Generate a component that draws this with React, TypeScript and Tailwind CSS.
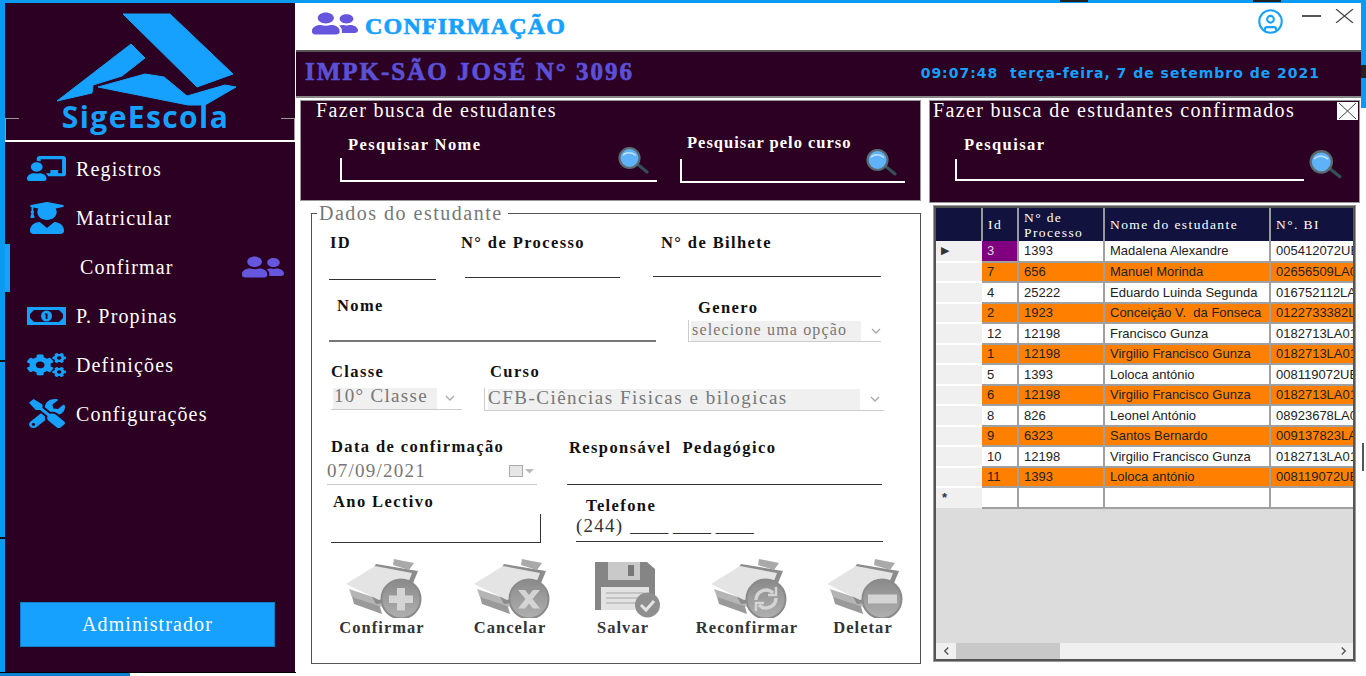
import type { ReactNode } from "react";
import { CircleUser } from "lucide-react";
import { FaChalkboardTeacher, FaCogs, FaTools, FaUserFriends, FaUserGraduate } from "react-icons/fa";

const SERIF = "font-['Liberation_Serif','Times_New_Roman',serif]";

const NAV = [
  { label: "Registros", icon: <FaChalkboardTeacher preserveAspectRatio="none" className="h-[25px] w-[39px]" /> },
  { label: "Matricular", icon: <FaUserGraduate preserveAspectRatio="none" className="h-[32px] w-[34px]" /> },
];

const NAV_BOTTOM = [
  { label: "P. Propinas", icon: <BillIcon /> },
  { label: "Definições", icon: <FaCogs preserveAspectRatio="none" className="h-[24px] w-[39px]" /> },
  { label: "Configurações", icon: <FaTools preserveAspectRatio="none" className="h-[29px] w-[36px]" /> },
];

const ROWS = [
  ["3", "1393", "Madalena Alexandre", "005412072UE"],
  ["7", "656", "Manuel Morinda", "02656509LA0"],
  ["4", "25222", "Eduardo Luinda Segunda", "016752112LA"],
  ["2", "1923", "Conceição V.  da Fonseca", "0122733382L"],
  ["12", "12198", "Francisco Gunza", "0182713LA01"],
  ["1", "12198", "Virgilio Francisco Gunza", "0182713LA01"],
  ["5", "1393", "Loloca antónio", "008119072UE"],
  ["6", "12198", "Virgilio Francisco Gunza", "0182713LA01"],
  ["8", "826", "Leonel António", "08923678LA0"],
  ["9", "6323", "Santos Bernardo", "009137823LA"],
  ["10", "12198", "Virgilio Francisco Gunza", "0182713LA01"],
  ["11", "1393", "Loloca antónio", "008119072UE"],
];

function BillIcon() {
  return (
    <svg viewBox="0 0 39 18" className="h-[18px] w-[39px]">
      <rect width="39" height="18" fill="#16a1ff" />
      <path d="M7 3h25l4 4v4l-4 4H7l-4-4V7z" fill="#2c0022" />
      <circle cx="19.500" cy="9" r="5.500" fill="#16a1ff" />
      <path d="M18.700 6.500h1.800v5.500h-1.800z M17.500 7l1.500-1v2z" fill="#2c0022" />
    </svg>
  );
}

function Logo() {
  return (
    <svg viewBox="0 0 290 105" className="h-[105px] w-[290px]">
      <g fill="#16a1ff" stroke="#16a1ff" strokeWidth="1" strokeLinejoin="round" transform="translate(-5 -10)">
        <path d="M123 14 L170 14 L233 74 L197 87 Z" />
        <path d="M57 101 L131 44 L145 58 L122 76 L93 85 L92 93 Z" />
        <path d="M98 87 L145 74 L164 77 L187 96 L225 85 L236 87 L205 105 L188 105 Z" />
      </g>
    </svg>
  );
}

function SearchIcon({ className }: { className: string }) {
  return (
    <svg viewBox="0 0 32 27" className={className}>
      <path d="M19 16l11 9" stroke="#34505a" strokeWidth="3" strokeLinecap="round" />
      <circle cx="12.500" cy="11" r="10" fill="#60b2f8" stroke="#5b6a70" strokeWidth="2.200" />
      <path d="M6 8.500c2-3.500 9-4 13 0" fill="none" stroke="#bfe0fb" strokeWidth="1.400" />
    </svg>
  );
}

function ClipboardIcon({ badge }: { badge: "plus" | "x" | "sync" | "minus" }) {
  return (
    <svg viewBox="0 0 76 62" className="ml-[4px] h-[62px] w-[76px]">
      <defs>
        <linearGradient id="badge-fill" x1="0" y1="0" x2="0" y2="1">
          <stop offset="0" stopColor="#8a8a8a" />
          <stop offset="1" stopColor="#b0b0b0" />
        </linearGradient>
      </defs>
      <path d="M5 37L33 47L36 58L8 48Z" fill="#9a9a9a" />
      <path d="M3 33L33 43L36 51L6 41Z" fill="#b5b5b5" />
      <path d="M30 8L72 15L60 44L30 48L18 26Z" fill="#8c8c8c" />
      <path d="M48 3L68 7L63 14L47 9Z" fill="#a9a9a9" />
      <path d="M0 28L29 10L66 17L58 38L33 44Z" fill="#e4e4e4" />
      <circle cx="55" cy="43" r="19.500" fill="url(#badge-fill)" stroke="#8a8a8a" strokeWidth="2" />
      {badge === "plus" && <path d="M51 32h8v7.500h8v7.500h-8v7.500h-8V47h-8v-7.500h8z" fill="#d4d4d4" />}
      {badge === "x" && <path d="M44 34h7l4 5 4-5h7l-7.500 9 7.500 9.500h-7l-4-5-4 5h-7l7.500-9.500z" fill="#d4d4d4" />}
      {badge === "minus" && <rect x="41" y="38.500" width="29" height="9" fill="#d4d4d4" />}
      {badge === "sync" && (
        <g fill="none" stroke="#d4d4d4" strokeWidth="3.500">
          <path d="M45 44a10 10 0 0 1 17-7" />
          <path d="M65 42a10 10 0 0 1-17 7" />
          <path d="M65 31v8h-8" strokeWidth="2.500" />
          <path d="M45 55v-8h8" strokeWidth="2.500" />
        </g>
      )}
    </svg>
  );
}

function FloppyIcon() {
  return (
    <svg viewBox="0 0 70 56" className="ml-[14px] h-[56px] w-[70px]">
      <path d="M0 0H52L60 7V48H0Z" fill="#858585" />
      <rect x="13" y="0" width="32" height="18" fill="#c9c9c9" />
      <rect x="33" y="3" width="6" height="11" fill="#777" />
      <rect x="6" y="25" width="48" height="23" fill="#e2e2e2" />
      <path d="M11 31h38M11 36h38M11 41h38" stroke="#c4c4c4" strokeWidth="2" />
      <circle cx="52.500" cy="43" r="12.500" fill="#8f8f8f" />
      <path d="M46 43l5 5 8-9" fill="none" stroke="#e4e4e4" strokeWidth="3" />
    </svg>
  );
}

function Chevron({ className }: { className: string }) {
  return (
    <svg viewBox="0 0 10 6" className={className}>
      <path d="M1 1l4 4 4-4" fill="none" stroke="#a8a8a8" strokeWidth="1.300" />
    </svg>
  );
}

function Label({ children, className = "" }: { children: string; className?: string }) {
  return <div className={`h-[18px] text-[16.500px] font-bold leading-[20px] tracking-[1.400px] whitespace-pre text-[#111] ${className}`}>{children}</div>;
}

function ActionButton({ label, icon, width }: { label: string; icon: ReactNode; width: string }) {
  return (
    <div className={`flex flex-col items-center ${width}`}>
      <div className="flex h-[62px] items-end">{icon}</div>
      <div className="mt-[-2px] text-[16.500px] font-bold tracking-[1.050px] text-[#333]">{label}</div>
    </div>
  );
}

function Sidebar() {
  const item = "flex h-[49px] items-center text-[20px] tracking-[1.150px] text-white";
  return (
    <aside className="flex h-[669px] w-[290px] flex-col bg-[#2c0022]">
      <div className="relative h-[139px] border-b-2 border-white">
        <div className="pt-[7px]">
          <Logo />
        </div>
        <div className="absolute top-[96px] left-0 w-full pr-[9px] text-center font-['Open_Sans',sans-serif] text-[30px] leading-[36px] font-bold tracking-[1.400px] text-[#16a1ff]">SigeEscola</div>
        <div className="absolute top-[115px] left-0 h-[22px] w-[14px] border-t border-l border-[#999]" />
        <div className="absolute top-[115px] right-0 h-[22px] w-[14px] border-t border-r border-[#999]" />
      </div>
      <nav className="mt-[2px] text-white">
        {NAV.map((n) => (
          <div key={n.label} className={item}>
            <div className="ml-[22px] flex w-[49px] justify-center pr-[10px] text-[#16a1ff]">{n.icon}</div>
            {n.label}
          </div>
        ))}
        <div className={`${item} relative`}>
          <div className="absolute top-[2px] left-0 h-[48px] w-[5px] bg-[#16a1ff]" />
          <span className="ml-[75px]">Confirmar</span>
          <FaUserFriends preserveAspectRatio="none" className="ml-[68px] h-[24px] w-[42px] text-[#6655dd]" />
        </div>
        {NAV_BOTTOM.map((n) => (
          <div key={n.label} className={item}>
            <div className="ml-[22px] flex w-[49px] justify-center pr-[10px] text-[#16a1ff]">{n.icon}</div>
            {n.label}
          </div>
        ))}
      </nav>
      <div className="mt-auto mr-[20px] mb-[25px] ml-[15px] flex h-[45px] items-center justify-center border border-[#0f7fc8] bg-[#16a1ff] pb-[2px] text-[20px] tracking-[1.100px] text-white">Administrador</div>
    </aside>
  );
}

function SearchPanels() {
  const title = "text-[20px] leading-[18px] tracking-[1.350px] whitespace-nowrap";
  const searchLabel = "text-[16.500px] leading-[18px] font-bold tracking-[1.400px] whitespace-nowrap";
  return (
    <div className="flex items-start text-white">
      <section className="h-[101px] w-[621px] border border-[#999] bg-[#2c0022]">
        <div className={`ml-[15px] ${title}`}>Fazer busca de estudantes</div>
        <div className="flex">
          <div className="ml-[39px] w-[317px]">
            <div className={`mt-[17px] ml-[8px] ${searchLabel}`}>Pesquisar Nome</div>
            <div className="relative mt-[4px] h-[24px] border-b-2 border-l-2 border-white">
              <SearchIcon className="absolute top-[-11px] right-[8px] h-[27px] w-[32px]" />
            </div>
          </div>
          <div className="ml-[23px] w-[225px]">
            <div className={`mt-[15px] ml-[7px] text-[16.500px] leading-[18px] font-bold tracking-[1px] whitespace-nowrap`}>Pesquisar pelo curso</div>
            <div className="relative mt-[7px] h-[24px] border-b-2 border-l-2 border-white">
              <SearchIcon className="absolute top-[-10px] right-[8px] h-[27px] w-[32px]" />
            </div>
          </div>
        </div>
      </section>
      <section className="relative ml-[8px] h-[103px] w-[431px] border border-[#999] bg-[#2c0022]">
        <div className={`ml-[3px] ${title}`}>Fazer busca de estudantes confirmados</div>
        <div className="absolute top-[1px] right-[1px] flex h-[18px] w-[21px] items-center justify-center bg-white">
          <svg viewBox="0 0 21 18" className="h-[18px] w-[21px]">
            <path d="M2 1l17 16M19 1L2 17" stroke="#444" strokeWidth="1" />
          </svg>
        </div>
        <div className={`mt-[17px] ml-[34px] ${searchLabel}`}>Pesquisar</div>
        <div className="relative mt-[5px] ml-[25px] h-[22px] w-[349px] border-b-2 border-l-2 border-white">
          <SearchIcon className="absolute top-[-9px] right-[-38px] h-[29px] w-[34px]" />
        </div>
      </section>
    </div>
  );
}

function StudentForm() {
  const line = "border-b border-[#333]";
  return (
    <fieldset className="mt-[1px] ml-[11px] h-[460px] w-[610px] border border-[#555]">
      <legend className="ml-[5px] pr-[5px] pl-[2px] text-[20px] leading-[19px] tracking-[1.500px] text-[#777]">Dados do estudante</legend>
      <div className="pl-[17px]">
        {/* linha 1 */}
        <div className="mt-[10px] flex h-[49px] items-start">
          <div className={`h-[47px] w-[107px] ${line}`}>
            <Label className="ml-[1px]">ID</Label>
          </div>
          <div className={`ml-[29px] h-[45px] w-[155px] ${line}`}>
            <Label className="-ml-[4px]">N° de Processo</Label>
          </div>
          <div className={`ml-[33px] h-[44px] w-[228px] ${line}`}>
            <Label className="ml-[8px]">N° de Bilhete</Label>
          </div>
        </div>
        {/* linha 2 */}
        <div className="flex h-[61px] items-start">
          <div className="h-[60px] w-[327px] border-b-2 border-[#777] pt-[14px]">
            <Label className="ml-[8px]">Nome</Label>
          </div>
          <div className="ml-[32px] w-[193px] pt-[16px]">
            <Label className="ml-[10px]">Genero</Label>
            <div className="mt-[4px] flex h-[22px] items-center border-b border-l border-[#ccc] pl-[2px]">
              <div className="h-[20px] w-[170px] bg-[#f0f0f0] pl-[1px] text-[16px] leading-[18px] tracking-[1.150px] whitespace-nowrap text-[#777]">selecione uma opção</div>
              <Chevron className="ml-[10px] h-[6px] w-[10px]" />
            </div>
          </div>
        </div>
        {/* linha 3 */}
        <div className="flex h-[68px] items-start pt-[19px]">
          <div className="ml-[2px] w-[131px]">
            <Label>Classe</Label>
            <div className="mt-[7px] flex h-[23px] items-center border-b border-[#ccc] pl-[2px]">
              <div className="h-[21px] w-[104px] bg-[#f0f0f0] pl-[1px] text-[19px] leading-[16px] tracking-[1.300px] whitespace-nowrap text-[#777]">10° Classe</div>
              <Chevron className="ml-[8px] h-[6px] w-[10px]" />
            </div>
          </div>
          <div className="ml-[22px] w-[400px]">
            <Label className="ml-[6px]">Curso</Label>
            <div className="mt-[8px] flex h-[23px] items-center border-b border-l border-[#ccc] pl-[3px]">
              <div className="h-[21px] w-[372px] bg-[#f0f0f0] text-[19px] leading-[17px] tracking-[1.500px] whitespace-nowrap text-[#777]">CFB-Ciências Fisicas e bilogicas</div>
              <Chevron className="ml-[10px] h-[6px] w-[10px]" />
            </div>
          </div>
        </div>
        {/* linha 4 */}
        <div className="flex h-[74px] items-start pt-[26px]">
          <div className="-ml-[2px] h-[48px] w-[210px] border-b border-[#ccc]">
            <Label className="ml-[4px] tracking-[1.200px]">Data de confirmação</Label>
            <div className="mt-[5px] flex items-center text-[19px] leading-[21px] tracking-[1.250px] text-[#777]">
              07/09/2021
              <svg viewBox="0 0 26 12" className="ml-[83px] h-[12px] w-[26px]">
                <rect x="0.500" y="0.500" width="13" height="11" fill="#e6e6e6" stroke="#aaa" />
                <path d="M16 4h9l-4.500 4.500z" fill="#bbb" />
              </svg>
            </div>
          </div>
          <div className={`ml-[30px] h-[48px] w-[315px] ${line}`}>
            <Label className="mt-[1px] ml-[2px]">Responsável  Pedagógico</Label>
          </div>
        </div>
        {/* linha 5 */}
        <div className="flex h-[58px] items-start">
          <div className="ml-[2px] w-[210px] pt-[7px]">
            <Label className="ml-[2px]">Ano Lectivo</Label>
            <div className="mt-[4px] h-[29px] border-r border-b border-[#333]" />
          </div>
          <div className={`ml-[35px] h-[57px] w-[307px] pt-[11px] ${line}`}>
            <Label className="ml-[10px]">Telefone</Label>
            <div className="mt-[1px] text-[19px] leading-[21px] whitespace-pre text-[#333]">
              <span className="tracking-[1.200px]">(244)</span>
              <span className="ml-[7px]">____ ____ ____</span>
            </div>
          </div>
        </div>
        {/* botões */}
        <div className="-ml-[11px] flex pt-[13px]">
          <ActionButton label="Confirmar" width="w-[128px]" icon={<ClipboardIcon badge="plus" />} />
          <ActionButton label="Cancelar" width="w-[128px]" icon={<ClipboardIcon badge="x" />} />
          <ActionButton label="Salvar" width="w-[98px]" icon={<FloppyIcon />} />
          <ActionButton label="Reconfirmar" width="w-[150px]" icon={<ClipboardIcon badge="sync" />} />
          <ActionButton label="Deletar" width="w-[82px]" icon={<ClipboardIcon badge="minus" />} />
        </div>
      </div>
    </fieldset>
  );
}

function StudentGrid() {
  const head = "border-r-2 border-[#999] bg-[#12123f] text-[13.500px] leading-[15px] tracking-[1.400px] text-white";
  const cell = "overflow-hidden border-r-2 border-b-2 border-[#a0a0a0] pl-[5px] whitespace-pre";
  return (
    <div className="ml-[4px] flex h-[457px] w-[423px] flex-col border border-[#999] bg-[#dcdcdc]">
      <div className="flex h-full flex-col border-2 border-[#555]">
        <div className="h-[435px] overflow-hidden">
          <table className="w-[420px] table-fixed border-collapse font-['Liberation_Sans',Arial,sans-serif] text-[13px] leading-[15px] text-[#222]">
            <colgroup>
              <col className="w-[46px]" />
              <col className="w-[36px]" />
              <col className="w-[86px]" />
              <col className="w-[166px]" />
              <col className="w-[86px]" />
            </colgroup>
            <thead className={SERIF}>
              <tr className="h-[33px]">
                <th className={head} />
                <th className={`${head} pl-[5px] text-left font-normal`}>Id</th>
                <th className={`${head} pl-[5px] text-left font-normal`}>
                  N° de
                  <br />
                  Processo
                </th>
                <th className={`${head} pl-[5px] text-left font-normal whitespace-nowrap`}>Nome do estudante</th>
                <th className={`${head} pl-[5px] text-left font-normal`}>N°. BI</th>
              </tr>
            </thead>
            <tbody>
              {ROWS.map((row, i) => {
                const bg = i % 2 === 1 ? "bg-[#ff8000]" : "bg-white";
                return (
                  <tr key={i} className="h-[20.500px]">
                    <td className="border-b-2 border-white bg-[#f0f0f0] pl-[5px] text-[11px] text-[#333]">{i === 0 ? "▶" : ""}</td>
                    <td className={`${cell} ${i === 0 ? "bg-[#800080] text-[#ddd]" : bg}`}>{row[0]}</td>
                    <td className={`${cell} ${bg}`}>{row[1]}</td>
                    <td className={`${cell} ${bg}`}>{row[2]}</td>
                    <td className={`${cell} ${bg} pl-[4px]`}>{row[3]}</td>
                  </tr>
                );
              })}
              <tr className="h-[20.500px]">
                <td className="bg-[#f0f0f0] pl-[6px] text-[13px] font-bold text-[#333]">*</td>
                <td className={`${cell} bg-white`} />
                <td className={`${cell} bg-white`} />
                <td className={`${cell} bg-white`} />
                <td className={`${cell} bg-white`} />
              </tr>
            </tbody>
          </table>
        </div>
        <div className="flex h-[16px] items-center bg-[#f0f0f0]">
          <svg viewBox="0 0 8 10" className="mr-[6px] ml-[7px] h-[10px] w-[7px]">
            <path d="M6 1L2 5l4 4" fill="none" stroke="#555" strokeWidth="1.600" />
          </svg>
          <div className="h-[16px] w-[104px] bg-[#c8c8c8]" />
          <svg viewBox="0 0 8 10" className="mr-[6px] ml-auto h-[10px] w-[7px]">
            <path d="M2 1l4 4-4 4" fill="none" stroke="#555" strokeWidth="1.600" />
          </svg>
        </div>
      </div>
    </div>
  );
}

export default function App() {
  return (
    <div className={`h-[676px] w-[1366px] overflow-hidden bg-white ${SERIF}`}>
      <div className="flex h-[3px] bg-[#0a9bf0]">
        <div className="ml-[1060px] h-[2px] w-[28px] bg-[#222]" />
        <div className="ml-[165px] h-[2px] w-[28px] bg-[#222]" />
      </div>
      <div className="flex">
        <div className="flex h-[669px] w-[5px] flex-col bg-[#0a9bf0]">
          <div className="mt-[357px] h-[2px] bg-[#111]" />
          <div className="mt-[175px] h-[2px] bg-[#111]" />
        </div>
        <Sidebar />
        <main className="ml-[1px] w-[1065px]">
          <header className="flex h-[49px] items-start border-b-2 border-[#555]">
            <FaUserFriends preserveAspectRatio="none" className="mt-[8px] ml-[16px] h-[25px] w-[46px] text-[#6655dd]" />
            <h1 className="mt-[9px] ml-[7px] text-[24px] leading-[28px] font-bold tracking-[1.200px] text-[#16a1ff] [-webkit-text-stroke:0.7px_#16a1ff]">CONFIRMAÇÃO</h1>
            <CircleUser className="mt-[5px] ml-auto h-[27px] w-[27px] text-[#16a1ff]" strokeWidth={1.800} />
            <div className="mt-[12px] ml-[18px] h-[2px] w-[19px] bg-[#555]" />
            <svg viewBox="0 0 19 14" className="mt-[6px] mr-[7px] ml-[14px] h-[14px] w-[19px]">
              <path d="M1 0l17 14M18 0L1 14" stroke="#444" strokeWidth="1.200" />
            </svg>
          </header>
          <div className="flex h-[46px] items-center border-b-2 border-[#888] bg-[#2c0022]">
            <div className="mt-[-5px] ml-[9px] text-[25px] font-bold tracking-[2px] text-[#5b50d8] [-webkit-text-stroke:0.7px_#5b50d8]">IMPK-SÃO JOSÉ N° 3096</div>
            <div className="mt-[-1px] mr-[41px] ml-auto font-['DejaVu_Sans',sans-serif] text-[14px] font-bold tracking-[1px] whitespace-pre text-[#16a1ff]">09:07:48  terça-feira, 7 de setembro de 2021</div>
          </div>
          <div className="mt-[2px] ml-[4px]">
            <SearchPanels />
            <div className="flex items-start">
              <StudentForm />
              <div className="mt-[2px] ml-[8px]">
                <StudentGrid />
              </div>
            </div>
          </div>
        </main>
        <div className="flex w-[5px] flex-col">
          <div className="h-[62px] bg-[#0a9bf0]" />
          <div className="h-[13px] bg-[#222]" />
          <div className="h-[30px] bg-[#0a9bf0]" />
          <div className="mt-[335px] ml-[1px] h-[28px] w-[2px] bg-[#555]" />
        </div>
      </div>
      <div className="h-[1px] w-[296px] bg-black" />
      <div className="h-[3px] w-[130px] bg-[#0a7fd8]" />
    </div>
  );
}
